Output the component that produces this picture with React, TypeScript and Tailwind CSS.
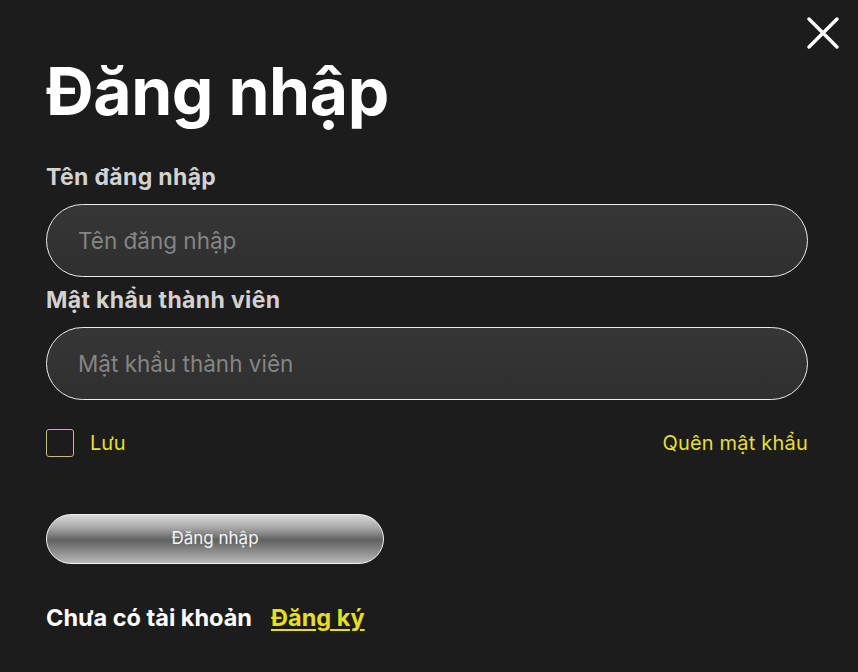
import { useState } from 'react';

export default function App() {
  const [username, setUsername] = useState('');
  const [password, setPassword] = useState('');
  const [remember, setRemember] = useState(false);

  return (
    <div
      className="relative min-h-screen w-full bg-[#1c1c1c] pl-[46px] pr-[50px] pt-[58px] text-white"
      style={{ fontFamily: 'Inter, "Noto Sans", "Liberation Sans", sans-serif' }}
    >
      <button className="absolute right-[18px] top-[16px] flex h-[34px] w-[34px] items-center justify-center" aria-label="Đóng">
        <svg width="32" height="32" viewBox="0 0 32 32" fill="none" stroke="white" strokeWidth="3.4" strokeLinecap="round">
          <path d="M2 2L30 30M30 2L2 30" />
        </svg>
      </button>

      <h1 className="text-[66px] font-bold leading-none tracking-[-0.4px]">Đăng nhập</h1>

      <form className="mt-[42px] flex flex-col" onSubmit={(e) => e.preventDefault()}>
        <label htmlFor="username" className="text-[23px] font-bold leading-none tracking-[0.35px] text-[#d2d2d2]">
          Tên đăng nhập
        </label>
        <input
          id="username"
          value={username}
          onChange={(e) => setUsername(e.target.value)}
          placeholder="Tên đăng nhập"
          className="mt-[15px] h-[73px] w-full rounded-full border-[1.5px] border-[#ececec] bg-[linear-gradient(to_bottom,#363636,#2f2f2f)] px-[31px] text-[22.5px] text-white outline-none placeholder:text-[#858585]"
        />

        <label htmlFor="password" className="mt-3 text-[23px] font-bold leading-none tracking-[0.35px] text-[#d2d2d2]">
          Mật khẩu thành viên
        </label>
        <input
          id="password"
          type="password"
          value={password}
          onChange={(e) => setPassword(e.target.value)}
          placeholder="Mật khẩu thành viên"
          className="mt-[15px] h-[73px] w-full rounded-full border-[1.5px] border-[#ececec] bg-[linear-gradient(to_bottom,#363636,#2f2f2f)] px-[31px] text-[22.5px] text-white outline-none placeholder:text-[#858585]"
        />

        <div className="mt-[29px] flex h-[28px] items-center justify-between">
          <label className="flex cursor-pointer items-center gap-4">
            <span
              onClick={() => setRemember(!remember)}
              className="flex h-[28px] w-[28px] items-center justify-center rounded-[3px] border-[1.5px] border-[#cdb872]"
            >
              {remember && <span className="h-3 w-3 bg-[#e6df34]" />}
            </span>
            <span className="text-[20px] leading-none text-[#e6df34]">Lưu</span>
          </label>
          <a href="#" className="text-[20px] leading-none tracking-[0.2px] text-[#e6df34]">
            Quên mật khẩu
          </a>
        </div>

        <button
          type="submit"
          className="mt-[57px] h-[50px] w-[338px] rounded-full border-[1.5px] border-[#f0f0f0] bg-[linear-gradient(to_bottom,#d8d8d8_0%,#a4a4a4_28%,#606060_52%,#8c8c8c_76%,#b8b8b8_100%)] text-[17px] text-[#f4f4f4]"
        >
          Đăng nhập
        </button>

        <p className="mt-[42px] flex items-center gap-[19px] text-[23.5px] font-bold leading-none">
          <span className="text-white">Chưa có tài khoản</span>
          <a href="#" className="text-[#e6df1e] underline decoration-2 underline-offset-[3px]">
            Đăng ký
          </a>
        </p>
      </form>
    </div>
  );
}
